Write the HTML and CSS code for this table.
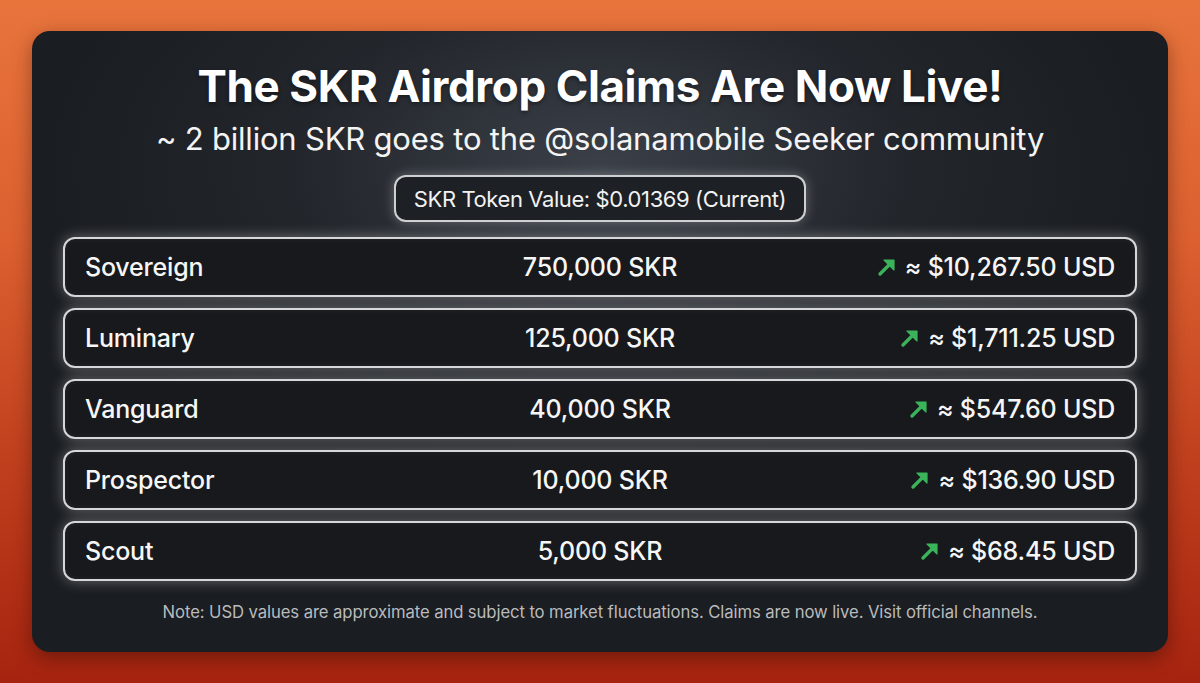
FILE: index.html
```html
<!DOCTYPE html>
<html lang="en">
<head>
<meta charset="utf-8">
<link rel="stylesheet" href="styles.css">
<title>SKR Airdrop</title>
</head>
<body>
<main class="card">
  <h1 class="title">The SKR Airdrop Claims Are Now Live!</h1>
  <p class="subtitle">~ 2 billion SKR goes to the @solanamobile Seeker community</p>
  <div class="pill">SKR Token Value: $0.01369 (Current)</div>
  <div class="rows">
    <div class="row"><span class="tier">Sovereign</span><span class="amount">750,000 SKR</span><span class="usd"><svg class="arrow" viewBox="0 0 20 20"><path class="shaft" d="M3 17 L12 8"/><path class="head" d="M7 3 H17 V13 Z"/></svg>≈ $10,267.50 USD</span></div>
    <div class="row"><span class="tier">Luminary</span><span class="amount">125,000 SKR</span><span class="usd"><svg class="arrow" viewBox="0 0 20 20"><path class="shaft" d="M3 17 L12 8"/><path class="head" d="M7 3 H17 V13 Z"/></svg>≈ $1,711.25 USD</span></div>
    <div class="row"><span class="tier">Vanguard</span><span class="amount">40,000 SKR</span><span class="usd"><svg class="arrow" viewBox="0 0 20 20"><path class="shaft" d="M3 17 L12 8"/><path class="head" d="M7 3 H17 V13 Z"/></svg>≈ $547.60 USD</span></div>
    <div class="row"><span class="tier">Prospector</span><span class="amount">10,000 SKR</span><span class="usd"><svg class="arrow" viewBox="0 0 20 20"><path class="shaft" d="M3 17 L12 8"/><path class="head" d="M7 3 H17 V13 Z"/></svg>≈ $136.90 USD</span></div>
    <div class="row"><span class="tier">Scout</span><span class="amount">5,000 SKR</span><span class="usd"><svg class="arrow" viewBox="0 0 20 20"><path class="shaft" d="M3 17 L12 8"/><path class="head" d="M7 3 H17 V13 Z"/></svg>≈ $68.45 USD</span></div>
  </div>
  <p class="note">Note: USD values are approximate and subject to market fluctuations. Claims are now live. Visit official channels.</p>
</main>
</body>
</html>
```

FILE: styles.css
```css
* { box-sizing: border-box; }
html, body { margin: 0; height: 100%; }
body {
  width: 1200px;
  height: 683px;
  overflow: hidden;
  background: linear-gradient(180deg, #e8743c 0%, #dc6030 35%, #c2421f 65%, #a6230f 100%);
  font-family: Inter, "Noto Sans", sans-serif;
  padding: 31px 32px;
}
.card {
  height: 621px;
  border-radius: 18px;
  background:
    radial-gradient(ellipse 560px 320px at 50% 22%, rgba(70,76,86,0.75), rgba(50,54,62,0.35) 55%, rgba(0,0,0,0) 100%),
    #1a1d21;
  box-shadow: 0 6px 20px rgba(0,0,0,0.35);
  display: flex;
  flex-direction: column;
  align-items: center;
  padding: 24px 31px 0;
  color: #fff;
}
.title {
  margin: 0;
  font-size: 44px;
  font-weight: 700;
  letter-spacing: -0.4px;
  line-height: 62px;
  text-shadow: 0 2px 4px rgba(0,0,0,0.4);
}
.subtitle {
  margin: 2px 0 0;
  font-size: 31px;
  font-weight: 400;
  line-height: 40px;
  letter-spacing: -0.2px;
  color: #f4f4f4;
}
.pill {
  margin-top: 16px;
  width: 412px;
  height: 47px;
  border: 2px solid #cfd0d2;
  border-radius: 12px;
  background: #1d2024;
  box-shadow: 0 0 12px rgba(255,255,255,0.3);
  display: flex;
  align-items: center;
  justify-content: center;
  font-size: 22px;
  color: #f2f2f2;
  letter-spacing: -0.4px;
}
.rows {
  margin-top: 15px;
  width: 100%;
  display: flex;
  flex-direction: column;
  gap: 11px;
}
.row {
  height: 60px;
  border: 2px solid #d6d7d9;
  border-radius: 12px;
  background: #17191d;
  box-shadow: 0 0 14px rgba(255,255,255,0.34), inset 0 0 6px rgba(255,255,255,0.06);
  display: grid;
  grid-template-columns: 1fr auto 1fr;
  align-items: center;
  padding: 0 20px;
  font-size: 25px;
  font-weight: 500;
  color: #f6f6f6;
  letter-spacing: -0.2px;
}
.tier { justify-self: start; }
.amount { justify-self: center; }
.usd {
  justify-self: end;
  display: flex;
  align-items: center;
  gap: 8px;
}
.arrow {
  width: 20px;
  height: 20px;
}
.arrow .shaft {
  fill: none;
  stroke: #3ab35a;
  stroke-width: 3.4;
  stroke-linecap: round;
}
.arrow .head {
  fill: #3ab35a;
  stroke: #3ab35a;
  stroke-width: 1.2;
  stroke-linejoin: round;
}
.note {
  margin: 21px 0 0;
  font-size: 16.7px;
  color: #b9bbbe;
  letter-spacing: -0.1px;
}
```
